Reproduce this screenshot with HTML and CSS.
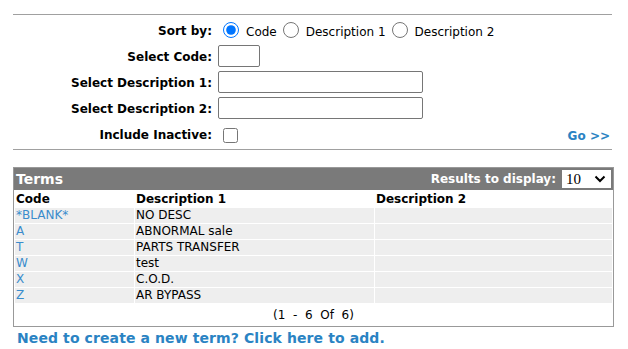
FILE: index.html
```html
<!DOCTYPE html>
<html>
<head>
<meta charset="utf-8">
<title>Terms</title>
<link rel="stylesheet" href="styles.css">
</head>
<body>
<div id="page">
    <form class="search">
        <div class="row">
            <label class="lbl">Sort by:</label>
            <div class="field sort">
                <input type="radio" name="sort" id="s_code" checked><label for="s_code">Code</label>
                <input type="radio" name="sort" id="s_d1"><label for="s_d1">Description 1</label>
                <input type="radio" name="sort" id="s_d2"><label for="s_d2">Description 2</label>
            </div>
        </div>
        <div class="row">
            <label class="lbl" for="code">Select Code:</label>
            <div class="field"><input type="text" id="code" class="txt txt-code"></div>
        </div>
        <div class="row">
            <label class="lbl" for="d1">Select Description 1:</label>
            <div class="field"><input type="text" id="d1" class="txt txt-desc"></div>
        </div>
        <div class="row">
            <label class="lbl" for="d2">Select Description 2:</label>
            <div class="field"><input type="text" id="d2" class="txt txt-desc"></div>
        </div>
        <div class="row">
            <label class="lbl" for="inact">Include Inactive:</label>
            <div class="field"><input type="checkbox" id="inact" class="chk"></div>
            <a href="#" class="go">Go &gt;&gt;</a>
        </div>
    </form>

    <div class="grid">
        <div class="grid-head">
            <span class="title">Terms</span>
            <span class="results">Results to display:
                <span class="pick-wrap">
                    <select class="pick"><option>10</option><option>25</option><option>50</option></select>
                    <svg class="chev" width="12" height="8" viewBox="0 0 12 8"><path d="M1.5 1.5 L6 6 L10.5 1.5" fill="none" stroke="#000" stroke-width="2"/></svg>
                </span>
            </span>
        </div>
        <table class="terms">
            <tr class="cols">
                <th class="c1">Code</th><th class="c2">Description 1</th><th class="c3">Description 2</th>
            </tr>
            <tr><td><a href="#">*BLANK*</a></td><td>NO DESC</td><td></td></tr>
            <tr><td><a href="#">A</a></td><td>ABNORMAL sale</td><td></td></tr>
            <tr><td><a href="#">T</a></td><td>PARTS TRANSFER</td><td></td></tr>
            <tr><td><a href="#">W</a></td><td>test</td><td></td></tr>
            <tr><td><a href="#">X</a></td><td>C.O.D.</td><td></td></tr>
            <tr><td><a href="#">Z</a></td><td>AR BYPASS</td><td></td></tr>
        </table>
        <div class="pager">(1&nbsp; -&nbsp; 6&nbsp; Of&nbsp; 6)</div>
    </div>

    <a href="#" class="add">Need to create a new term? Click here to add.</a>
</div>
</body>
</html>
```

FILE: styles.css
```css
*{box-sizing:border-box;}
body{
    margin:8px;
    font-family:"DejaVu Sans",Verdana,sans-serif;
    font-size:12px;
    color:#000;
    background:#fff;
}
a{color:#2a83c3;text-decoration:none;}
#page{padding:0 5px;}

.search{
    width:599px;
    margin-top:6px;
    border-top:1px solid #a0a0a0;
    border-bottom:1px solid #a0a0a0;
    padding:4px 0 4px;
}
.row{
    display:flex;
    align-items:center;
    height:22px;
    margin-bottom:4px;
}
.row:last-child{margin-bottom:0;}
.lbl{
    width:199px;
    text-align:right;
    font-weight:bold;
    padding-top:1px;
}
.field{
    flex:1;
    display:flex;
    align-items:center;
    padding-left:6px;
}
.sort input{
    width:16px;
    height:16px;
    margin:0 7px 0 6px;
}
.sort input:first-child{margin-left:5px;}
.sort label{padding-top:3px;}
.txt{
    height:22px;
    border:1px solid #767676;
    border-radius:2px;
    padding:0 3px;
    font:inherit;
}
.txt-code{width:42px;}
.txt-desc{width:205px;}
.chk{
    width:15px;
    height:15px;
    margin:3px 0 0 5px;
}
.go{
    font-weight:bold;
    margin-right:2px;
    padding-top:3px;
}

.grid{
    width:601px;
    margin-top:17px;
    border:1px solid #999;
}
.grid-head{
    display:flex;
    justify-content:space-between;
    align-items:center;
    height:22px;
    background:#7a7a7a;
    color:#fff;
    font-weight:bold;
    padding:0 2px 0 2px;
}
.title{font-size:14px;}
.results{display:flex;align-items:center;}
.pick-wrap{
    position:relative;
    margin-left:6px;
    height:18px;
}
.pick{
    -webkit-appearance:none;
    appearance:none;
    display:block;
    width:49px;
    height:18px;
    border:none;
    border-radius:0;
    outline:none;
    background:#fff;
    color:#000;
    font-family:"Liberation Serif",serif;
    font-weight:normal;
    font-size:15px;
    line-height:18px;
    padding:0 0 0 4px;
}
.chev{
    position:absolute;
    right:5px;
    top:5px;
    pointer-events:none;
}
.terms{
    width:100%;
    border-collapse:collapse;
    table-layout:fixed;
}
.terms th,.terms td{
    text-align:left;
    padding:0 1px;
    height:16px;
    line-height:14px;
    border:1px solid #fff;
    border-top:none;
}
.terms th{font-weight:bold;height:17px;padding-top:1px;}
.terms td{background:#eee;}
.terms .c1{width:120px;}
.terms .c2{width:240px;}
.terms a{color:#3a8ccc;}
.pager{
    text-align:center;
    height:22px;
    line-height:22px;
}
.add{
    display:block;
    margin:3px 0 0 4px;
    font-size:14px;
    font-weight:bold;
    letter-spacing:0.1px;
}
```
